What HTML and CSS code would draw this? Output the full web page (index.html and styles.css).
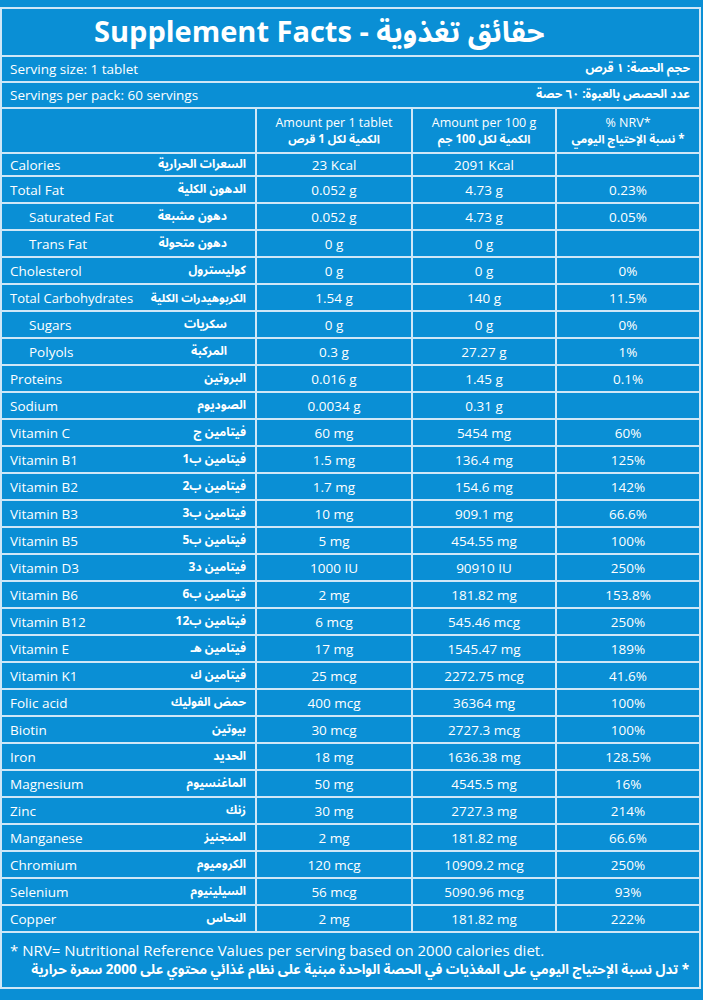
FILE: index.html
```html
<!DOCTYPE html>
<html lang="en">
<head>
<meta charset="utf-8">
<title>Supplement Facts</title>
<link rel="stylesheet" href="styles.css">
</head>
<body>
<table class="facts">
  <colgroup>
    <col class="c-name"><col class="c-amt1"><col class="c-amt2"><col class="c-nrv">
  </colgroup>
  <tr class="title-row"><td colspan="4"><div class="title">Supplement Facts - <span dir="rtl">حقائق تغذوية</span></div></td></tr>
  <tr class="serve-row"><td colspan="4"><div class="split"><span>Serving size: 1 tablet</span><span class="ar" dir="rtl">حجم الحصة: ١ قرص</span></div></td></tr>
  <tr class="serve-row"><td colspan="4"><div class="split"><span>Servings per pack: 60 servings</span><span class="ar" dir="rtl">عدد الحصص بالعبوة: ٦٠ حصة</span></div></td></tr>
  <tr class="head-row">
    <td></td>
    <td><div class="hd">Amount per 1 tablet</div><div class="hd ar" dir="rtl">الكمية لكل 1 قرص</div></td>
    <td><div class="hd">Amount per 100 g</div><div class="hd ar" dir="rtl">الكمية لكل 100 جم</div></td>
    <td><div class="hd">% NRV*</div><div class="hd ar" dir="rtl">* نسبة الإحتياج اليومي</div></td>
  </tr>
  <tr class="cal-row"><td><div class="split"><span>Calories</span><span class="ar" dir="rtl">السعرات الحرارية</span></div></td><td>23 Kcal</td><td>2091 Kcal</td><td></td></tr>
  <tr><td><div class="split"><span>Total Fat</span><span class="ar" dir="rtl">الدهون الكلية</span></div></td><td>0.052 g</td><td>4.73 g</td><td>0.23%</td></tr>
  <tr><td><div class="split sub"><span>Saturated Fat</span><span class="ar" dir="rtl">دهون مشبعة</span></div></td><td>0.052 g</td><td>4.73 g</td><td>0.05%</td></tr>
  <tr><td><div class="split sub"><span>Trans Fat</span><span class="ar" dir="rtl">دهون متحولة</span></div></td><td>0 g</td><td>0 g</td><td></td></tr>
  <tr><td><div class="split"><span>Cholesterol</span><span class="ar" dir="rtl">كوليسترول</span></div></td><td>0 g</td><td>0 g</td><td>0%</td></tr>
  <tr><td><div class="split small"><span>Total Carbohydrates</span><span class="ar" dir="rtl">الكربوهيدرات الكلية</span></div></td><td>1.54 g</td><td>140 g</td><td>11.5%</td></tr>
  <tr><td><div class="split sub"><span>Sugars</span><span class="ar" dir="rtl">سكريات</span></div></td><td>0 g</td><td>0 g</td><td>0%</td></tr>
  <tr><td><div class="split sub"><span>Polyols</span><span class="ar" dir="rtl">المركبة</span></div></td><td>0.3 g</td><td>27.27 g</td><td>1%</td></tr>
  <tr><td><div class="split"><span>Proteins</span><span class="ar" dir="rtl">البروتين</span></div></td><td>0.016 g</td><td>1.45 g</td><td>0.1%</td></tr>
  <tr><td><div class="split"><span>Sodium</span><span class="ar" dir="rtl">الصوديوم</span></div></td><td>0.0034 g</td><td>0.31 g</td><td></td></tr>
  <tr><td><div class="split"><span>Vitamin C</span><span class="ar" dir="rtl">فيتامين ج</span></div></td><td>60 mg</td><td>5454 mg</td><td>60%</td></tr>
  <tr><td><div class="split"><span>Vitamin B1</span><span class="ar" dir="rtl">فيتامين ب1</span></div></td><td>1.5 mg</td><td>136.4 mg</td><td>125%</td></tr>
  <tr><td><div class="split"><span>Vitamin B2</span><span class="ar" dir="rtl">فيتامين ب2</span></div></td><td>1.7 mg</td><td>154.6 mg</td><td>142%</td></tr>
  <tr><td><div class="split"><span>Vitamin B3</span><span class="ar" dir="rtl">فيتامين ب3</span></div></td><td>10 mg</td><td>909.1 mg</td><td>66.6%</td></tr>
  <tr><td><div class="split"><span>Vitamin B5</span><span class="ar" dir="rtl">فيتامين ب5</span></div></td><td>5 mg</td><td>454.55 mg</td><td>100%</td></tr>
  <tr><td><div class="split"><span>Vitamin D3</span><span class="ar" dir="rtl">فيتامين د3</span></div></td><td>1000 IU</td><td>90910 IU</td><td>250%</td></tr>
  <tr><td><div class="split"><span>Vitamin B6</span><span class="ar" dir="rtl">فيتامين ب6</span></div></td><td>2 mg</td><td>181.82 mg</td><td>153.8%</td></tr>
  <tr><td><div class="split"><span>Vitamin B12</span><span class="ar" dir="rtl">فيتامين ب12</span></div></td><td>6 mcg</td><td>545.46 mcg</td><td>250%</td></tr>
  <tr><td><div class="split"><span>Vitamin E</span><span class="ar" dir="rtl">فيتامين هـ</span></div></td><td>17 mg</td><td>1545.47 mg</td><td>189%</td></tr>
  <tr><td><div class="split"><span>Vitamin K1</span><span class="ar" dir="rtl">فيتامين ك</span></div></td><td>25 mcg</td><td>2272.75 mcg</td><td>41.6%</td></tr>
  <tr><td><div class="split"><span>Folic acid</span><span class="ar" dir="rtl">حمض الفوليك</span></div></td><td>400 mcg</td><td>36364 mg</td><td>100%</td></tr>
  <tr><td><div class="split"><span>Biotin</span><span class="ar" dir="rtl">بيوتين</span></div></td><td>30 mcg</td><td>2727.3 mcg</td><td>100%</td></tr>
  <tr><td><div class="split"><span>Iron</span><span class="ar" dir="rtl">الحديد</span></div></td><td>18 mg</td><td>1636.38 mg</td><td>128.5%</td></tr>
  <tr><td><div class="split"><span>Magnesium</span><span class="ar" dir="rtl">الماغنسيوم</span></div></td><td>50 mg</td><td>4545.5 mg</td><td>16%</td></tr>
  <tr><td><div class="split"><span>Zinc</span><span class="ar" dir="rtl">زنك</span></div></td><td>30 mg</td><td>2727.3 mg</td><td>214%</td></tr>
  <tr><td><div class="split"><span>Manganese</span><span class="ar" dir="rtl">المنجنيز</span></div></td><td>2 mg</td><td>181.82 mg</td><td>66.6%</td></tr>
  <tr><td><div class="split"><span>Chromium</span><span class="ar" dir="rtl">الكروميوم</span></div></td><td>120 mcg</td><td>10909.2 mcg</td><td>250%</td></tr>
  <tr><td><div class="split"><span>Selenium</span><span class="ar" dir="rtl">السيلينيوم</span></div></td><td>56 mcg</td><td>5090.96 mcg</td><td>93%</td></tr>
  <tr><td><div class="split"><span>Copper</span><span class="ar" dir="rtl">النحاس</span></div></td><td>2 mg</td><td>181.82 mg</td><td>222%</td></tr>
  <tr class="foot-row"><td colspan="4">
    <div class="foot-en">* NRV= Nutritional Reference Values per serving based on 2000 calories diet.</div>
    <div class="foot-ar ar" dir="rtl">* تدل نسبة الإحتياج اليومي على المغذيات في الحصة الواحدة مبنية على نظام غذائي محتوي على 2000 سعرة حرارية</div>
  </td></tr>
</table>
</body>
</html>
```

FILE: styles.css
```css
html, body {
  margin: 0;
  padding: 0;
  background: #0a8fd5;
}
body {
  padding-top: 7px;
  color: #ffffff;
  font-family: "Open Sans", "Noto Sans Arabic", "DejaVu Sans", sans-serif;
}
.facts {
  width: 701px;
  border-collapse: collapse;
  table-layout: fixed;
  border: 2px solid #cfe7f7;
}
.c-name { width: 255px; }
.c-amt1 { width: 156px; }
.c-amt2 { width: 144px; }
.c-nrv { width: 144px; }
.facts td {
  border: 2px solid #cfe7f7;
  padding: 0;
  height: 25px;
  text-align: center;
  vertical-align: middle;
  font-size: 13.5px;
  line-height: 16px;
  font-weight: 500;
}
.facts td:first-child { text-align: left; }
.ar {
  font-family: "Noto Sans Arabic", "DejaVu Sans", sans-serif;
  font-weight: 700;
  font-size: 12px;
}
.title-row td { height: 46px; }
.title {
  padding-left: 92px;
  text-align: left;
  font-size: 29px;
  font-weight: 700;
  line-height: 40px;
}
.title span {
  font-family: "Noto Sans Arabic", "DejaVu Sans", sans-serif;
  font-size: 29px;
}
.serve-row td { height: 24px; }
.split {
  display: flex;
  justify-content: space-between;
  align-items: center;
  padding: 0 9px 0 8px;
}
.split.sub { padding: 0 28px 0 27px; }
.split.small > span:first-child { font-size: 13px; }
.split.small .ar { font-size: 11.5px; }
.head-row td { height: 43px; }
.hd {
  font-size: 12.5px;
  line-height: 15px;
}
.hd.ar { font-size: 11.5px; line-height: 15px; margin-top: 2px; }
.cal-row td { height: 21px; }
.foot-row td {
  height: 54px;
  text-align: left;
}
.foot-en {
  padding-left: 8px;
  font-size: 15px;
  line-height: 17px;
}
.foot-ar {
  padding-right: 10px;
  margin-top: 2px;
  text-align: right;
  font-size: 13.5px;
  line-height: 17px;
}
```
